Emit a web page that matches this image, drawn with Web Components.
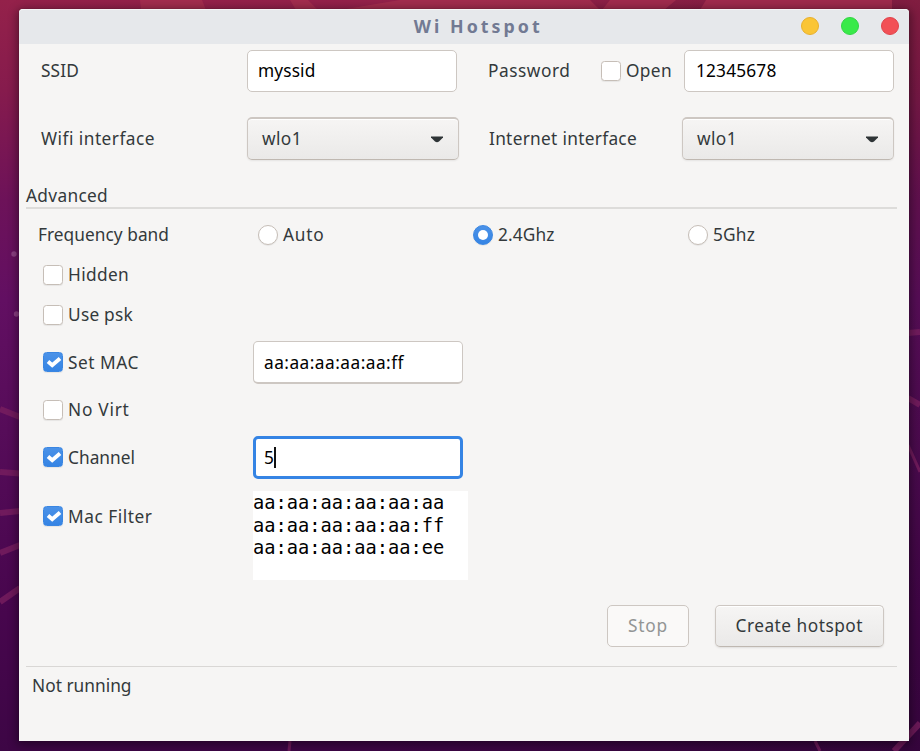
<!DOCTYPE html>
<html lang="en"><head><meta charset="utf-8"><title>Wi Hotspot</title>
<style>html,body{margin:0;height:751px;overflow:hidden}body{font-family:"Noto Sans","Open Sans",sans-serif;font-size:17.3px;line-height:22px;color:#33393b}</style>
</head><body>
<hotspot-desktop><hotspot-window></hotspot-window></hotspot-desktop>
<script>
function component(name, html, ready) {
  const template = document.createElement('template');
  template.innerHTML = html;
  customElements.define(name, class extends HTMLElement {
    connectedCallback() {
      if (this.shadowRoot) return;
      this.attachShadow({mode: 'open'}).append(template.content.cloneNode(true));
      if (ready) ready(this, this.shadowRoot);
    }
  });
}

/* A text run whose letter spacing is adjusted to span "fit" pixels. */
component('ui-text', `<style>:host{display:inline-block;white-space:pre;flex:none}span{display:inline-block}</style><span><slot></slot></span>`, (el, root) => {
  const fit = parseFloat(el.getAttribute('fit'));
  if (!fit) return;
  const span = root.querySelector('span');
  const n = el.textContent.length;
  const gap = (fit - span.getBoundingClientRect().width) / n;
  span.style.letterSpacing = gap + 'px';
});

component('ui-check', `<style>
:host{display:inline-flex;align-items:center;gap:5px;flex:none}
i{box-sizing:border-box;width:20px;height:20px;border:1px solid #c6beb7;border-radius:3.5px;background:#fff;box-shadow:0 1px 1px #0001;display:block}
svg{display:none;width:20px;height:20px;margin:-1px}
:host([radio]) i{border-radius:50%}
:host([checked]) i{background:linear-gradient(#4b92e8,#3584e4);border-color:#3a86e2}
:host([checked]:not([radio])) i{margin:-1px 0 1px}
:host([checked]:not([radio])) .c{display:block}
:host([checked][radio]) .r{display:block}
</style><i><svg class="c" viewBox="0 0 20 20"><path d="M5 9.600 9.200 13.200 17 6.500" fill="none" stroke="#fff" stroke-width="3.900"/></svg><svg class="r" viewBox="0 0 20 20"><circle cx="10" cy="10" r="5" fill="#fff"/></svg></i><slot></slot>`);

component('ui-entry', `<style>
:host{display:flex;align-items:center;box-sizing:border-box;width:210px;height:42px;border:1px solid #cdc7c2;border-radius:5px;background:#fff;color:#000;padding-left:10px;flex:none}
:host([tall]){height:43px;border-bottom-width:2px;padding-top:2px}
:host([focused]){border:3px solid #3584e4;padding:0 0 0 8px}
b{display:none;width:1.5px;height:21px;background:#111}
:host([focused]) b{display:block}
</style><slot></slot><b></b>`);

component('ui-combo', `<style>
:host{display:flex;align-items:center;justify-content:space-between;box-sizing:border-box;width:212px;height:43px;border:1px solid #cdc7c2;border-top-width:2px;border-bottom-color:#bfb8b1;border-radius:5px;background:linear-gradient(#f6f5f4,#eae9e8);box-shadow:inset 0 1px #fff,0 1px 2px #00000012;padding:0 15px 0 14px;flex:none}
svg{display:block}
</style><slot></slot><svg width="12" height="7" viewBox="0 0 12 7"><path d="M0 .5H12V1.500L8 5.500Q6 7 4 5.500L0 1.500Z" fill="#2e3436"/></svg>`);

component('ui-button', `<style>
:host{display:flex;align-items:center;justify-content:center;box-sizing:border-box;height:42px;border:1px solid #cdc7c2;border-bottom-color:#bfb8b1;border-radius:5px;background:linear-gradient(#f6f5f4,#eae9e8);box-shadow:inset 0 1px #fff,0 1px 2px #00000018;flex:none}
:host([disabled]){background:#faf9f8;color:#929595;border-color:#cdc7c2;box-shadow:none}
</style><slot></slot>`);

component('ui-textview', `<style>
:host{display:block;box-sizing:border-box;width:215px;height:89px;background:#fff;color:#000;font:18.7px/22.5px "DejaVu Sans Mono",monospace;white-space:pre;padding-top:1px;flex:none}
</style><slot></slot>`);

component('ui-titlebar', `<style>
:host{display:grid;grid-template-columns:1fr auto 1fr;align-items:center;box-sizing:border-box;height:35px;background:#e6e8eb;border-top:1px solid #f4f5f6;border-radius:4px 4px 0 0;color:#727a93;font-weight:700;font-size:17.8px;padding:0 10.5px 2px 0}
.t{grid-column:2;padding-left:39px}
div{display:flex;gap:22px;justify-content:flex-end}
i{width:16px;height:16px;border-radius:50%;background:#fac536;border:1px solid #e8b02e}
i+i{background:#39ea49;border-color:#31d643}i+i+i{background:#f25056;border-color:#e0434b}
</style><span class="t"><slot></slot></span><div><i></i><i></i><i></i></div>`);

component('hotspot-window', `<style>
:host{display:flex;flex-direction:column;box-sizing:border-box;width:890px;height:732px;background:#f6f5f4;border-radius:4px 4px 0 0;box-shadow:0 2px 10px 2px #0006,0 0 1px #0008}
.row{display:grid;align-items:center;flex:none}
.top{grid-template-columns:228px 241px 1fr}
.top>:first-child{margin-left:22px}
.password{display:flex;align-items:center;justify-content:space-between;padding-right:15px}
.password ui-check{margin:0 12px 0 auto}
.option{grid-template-columns:210px auto;justify-content:start;padding-left:24px}
.adv{height:28px;display:flex;align-items:flex-end;padding-left:7px;flex:none}
hr{margin:0 12px 0 7px;border:0;height:2px;background:#dddcda;flex:none}
hr.thin{height:1px;background:#d9d7d5}
.bands{grid-template-columns:220px 215px 215px auto;height:52px;padding-left:19px}
.filter{padding-top:12px;height:89px;align-items:start}
.filter ui-check{margin-top:15px}
.actions{display:flex;justify-content:flex-end;gap:25.5px;padding:25px 25px 0 0;height:61px;flex:none}
.status{padding:8px 13px}
</style>
<ui-titlebar><ui-text fit="129">Wi Hotspot</ui-text></ui-titlebar>
<div class="row top" style="height:54px"><ui-text fit="38">SSID</ui-text><ui-entry><ui-text fit="57.5">myssid</ui-text></ui-entry>
<div class="password"><ui-text fit="82.5">Password</ui-text><ui-check><ui-text fit="46">Open</ui-text></ui-check><ui-entry style="padding-left:11px"><ui-text fit="80.5">12345678</ui-text></ui-entry></div></div>
<div class="row top" style="height:81px"><ui-text fit="114">Wifi interface</ui-text><ui-combo><ui-text fit="40">wlo1</ui-text></ui-combo>
<div class="password" style="padding-left:1px"><ui-text fit="148">Internet interface</ui-text><ui-combo><ui-text fit="40">wlo1</ui-text></ui-combo></div></div>
<div class="adv"><ui-text fit="82">Advanced</ui-text></div><hr>
<div class="row bands"><ui-text fit="131">Frequency band</ui-text><ui-check radio><ui-text fit="41.5">Auto</ui-text></ui-check><ui-check radio checked><ui-text fit="56.5">2.4Ghz</ui-text></ui-check><ui-check radio><ui-text fit="42">5Ghz</ui-text></ui-check></div>
<div class="row option" style="height:28px"><ui-check><ui-text fit="61">Hidden</ui-text></ui-check></div>
<div class="row option" style="height:52px"><ui-check><ui-text fit="65">Use psk</ui-text></ui-check></div>
<div class="row option" style="height:43px"><ui-check checked><ui-text fit="71">Set MAC</ui-text></ui-check><ui-entry tall><ui-text fit="140">aa:aa:aa:aa:aa:ff</ui-text></ui-entry></div>
<div class="row option" style="height:52px"><ui-check><ui-text fit="61.5">No Virt</ui-text></ui-check></div>
<div class="row option" style="height:43px"><ui-check checked><ui-text fit="67">Channel</ui-text></ui-check><ui-entry tall focused><ui-text fit="10">5</ui-text></ui-entry></div>
<div class="row option filter"><ui-check checked><ui-text fit="84.5">Mac Filter</ui-text></ui-check><ui-textview>aa:aa:aa:aa:aa:aa
aa:aa:aa:aa:aa:ff
aa:aa:aa:aa:aa:ee</ui-textview></div>
<div class="actions"><ui-button disabled style="width:82px"><ui-text fit="40">Stop</ui-text></ui-button><ui-button style="width:169.5px"><ui-text fit="127.5">Create hotspot</ui-text></ui-button></div>
<hr class="thin"><div class="status"><ui-text fit="99.5">Not running</ui-text></div>`);

component('hotspot-desktop', `<style>
:host{display:block;position:relative;box-sizing:border-box;width:920px;height:751px;padding:9px 11px 10px 19px;overflow:hidden;background:linear-gradient(90deg,#0000 40%,#0002),linear-gradient(#94214a 0,#861b4d 90px,#6d1259 200px,#620f62 300px,#560c59 430px,#48064e 600px,#3d0645 751px)}
svg{position:absolute;inset:0}
::slotted(*){position:relative}
</style><svg width="920" height="751" viewBox="0 0 920 751" fill="none" stroke="#7b2060" stroke-width="6" opacity=".75">
<path d="M140 0H202L206 10H141Z M290 0H308L318 10H296Z M400 0H590L600 10H340Z M610 0H676L664 10H602Z M706 0H892L892 10H700Z" fill="#a83050" stroke="none"/>
<path d="M0 409 20 417M0 472 20 473.500M0 513 20 511M0 553 20 545M0 602 20 588M908 333 920 332M908 398 920 405M894 751Q908 736 920 723"/><path d="M908 445 920 472M290 741 289 751M815 741 820 751" stroke-width="3"/>
<g fill="#9a5090" stroke="none"><circle cx="14" cy="254" r="2.700"/><circle cx="16.500" cy="314" r="2.700"/></g></svg><slot></slot>`);
</script></body></html>
